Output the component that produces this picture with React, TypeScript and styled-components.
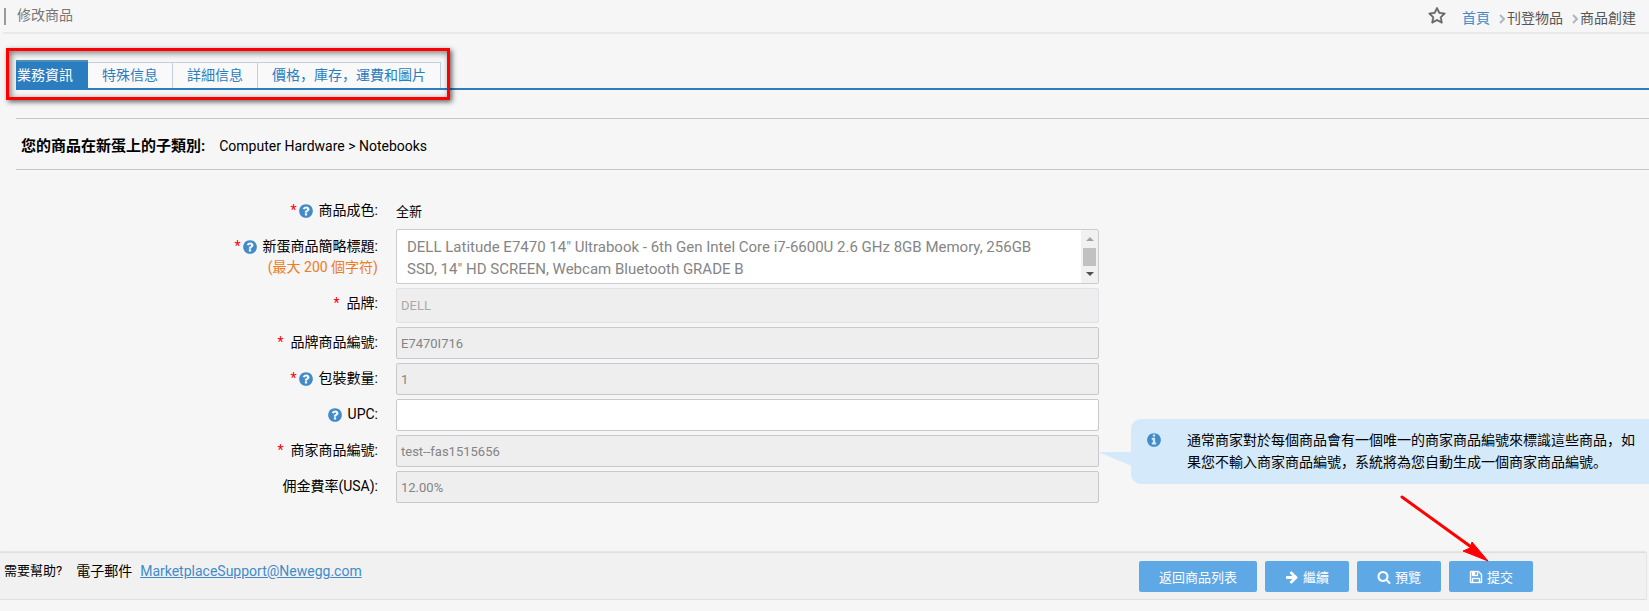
import React from 'react';
import styled, { createGlobalStyle } from 'styled-components';

const GlobalStyle = createGlobalStyle`
  *, *::before, *::after { box-sizing: border-box; }
  body {
    margin: 0;
    background: #f6f6f6;
    color: #000;
    font: 14px/22px Roboto, "Noto Sans CJK SC", sans-serif;
    overflow-x: hidden;
  }
  button, input, textarea { font-family: inherit; }
`;

/* ---------- icons ---------- */

const DISC =
  'q0 209-103 385.5t-279.5 279.5-385.5 103-385.5-103-279.5-279.5-103-385.5 103-385.5 279.5-279.5 385.5-103 385.5 103 279.5 279.5 103 385.5z';

const ICONS = {
  star: 'M1201 1004l306-297-422-62-189-382-189 382-422 62 306 297-73 421 378-199 377 199zm527-357q0 22-26 48l-363 354 86 500q1 7 1 20 0 50-41 50-19 0-40-12l-449-236-449 236q-22 12-40 12-21 0-31.5-14.5t-10.5-35.5q0-6 2-20l86-500-364-354q-25-27-25-48 0-37 56-46l502-73 225-455q19-41 49-41t49 41l225 455 502 73q56 9 56 46z',
  question:
    'M1024 1376v-192q0-14-9-23t-23-9h-192q-14 0-23 9t-9 23v192q0 14 9 23t23 9h192q14 0 23-9t9-23zm256-672q0-88-55.5-163t-138.5-116-170-41q-243 0-371 213-15 24 8 42l132 100q7 6 19 6 16 0 25-12 53-68 86-92 34-24 86-24 48 0 85.5 26t37.5 59q0 38-20 61t-68 45q-63 28-115.5 86.5t-52.5 125.5v36q0 14 9 23t23 9h192q14 0 23-9t9-23q0-19 21.5-49.5t54.5-49.5q32-18 49-28.5t46-35 44.5-48 28-60.5 12.5-81zm384 192' +
    DISC,
  info:
    'M1152 1376v-160q0-14-9-23t-23-9h-96v-512q0-14-9-23t-23-9h-320q-14 0-23 9t-9 23v160q0 14 9 23t23 9h96v320h-96q-14 0-23 9t-9 23v160q0 14 9 23t23 9h448q14 0 23-9t9-23zm-128-896v-160q0-14-9-23t-23-9h-192q-14 0-23 9t-9 23v160q0 14 9 23t23 9h192q14 0 23-9t9-23zm640 416' +
    DISC,
  arrow:
    'M1600 960q0 54-37 91l-651 651q-39 37-91 37-51 0-90-37l-75-75q-38-38-38-91t38-91l293-293h-704q-52 0-84.5-37.5t-32.5-90.5v-128q0-53 32.5-90.5t84.5-37.5h704l-293-294q-38-36-38-90t38-90l75-75q38-38 90-38 53 0 91 38l651 651q37 35 37 90z',
  search:
    'M1216 832q0-185-131.5-316.5t-316.5-131.5-316.5 131.5-131.5 316.5 131.5 316.5 316.5 131.5 316.5-131.5 131.5-316.5zm512 832q0 52-38 90t-90 38q-54 0-90-38l-343-342q-179 124-399 124-143 0-273.5-55.5t-225-150-150-225-55.5-273.5 55.5-273.5 150-225 225-150 273.5-55.5 273.5 55.5 225 150 150 225 55.5 273.5q0 220-124 399l343 343q37 37 37 90z',
  save: 'M512 1536h768v-384h-768v384zm896 0h128v-896q0-14-10-38.5t-20-34.5l-281-281q-10-10-34-20t-39-10v416q0 40-28 68t-68 28h-576q-40 0-68-28t-28-68v-416h-128v1280h128v-416q0-40 28-68t68-28h832q40 0 68 28t28 68v416zm-384-928v-320q0-13-9.5-22.5t-22.5-9.5h-192q-13 0-22.5 9.5t-9.5 22.5v320q0 13 9.5 22.5t22.5 9.5h192q13 0 22.5-9.5t9.5-22.5zm640 32v928q0 40-28 68t-68 28h-1344q-40 0-68-28t-28-68v-1344q0-40 28-68t68-28h928q40 0 88 20t76 48l280 280q28 28 48 76t20 88z',
};

const Svg = styled.svg<{ $color?: string; $stroke?: number }>`
  flex: none;
  fill: ${(p) => p.$color ?? 'currentColor'};
  stroke: ${(p) => (p.$stroke ? 'currentColor' : 'none')};
  stroke-width: ${(p) => p.$stroke ?? 0};
`;

type IconProps = { name: keyof typeof ICONS; size: number; color?: string; stroke?: number };

function Icon({ name, size, color, stroke }: IconProps) {
  return (
    <Svg viewBox="0 0 1792 1792" width={size} height={size} $color={color} $stroke={stroke} aria-hidden="true">
      <path d={ICONS[name]} />
    </Svg>
  );
}

const BLUE = '#428bca';

/* ---------- header ---------- */

const Header = styled.header`
  display: flex;
  justify-content: space-between;
  height: 34px;
  margin-left: 3px;
  padding-right: 13px;
  border-bottom: 2px solid #e8e8e8;
`;

const Title = styled.h1`
  align-self: flex-start;
  margin: 8px 0 0 1px;
  padding: 0 0 2px 11px;
  border-left: 2px solid #999;
  color: #777;
  font-size: 14px;
  font-weight: 400;
  line-height: 15px;
`;

const Crumbs = styled.nav`
  display: flex;
  align-items: center;
  padding-top: 3px;
  color: #555;
`;

const StarButton = styled.button`
  display: flex;
  margin: 0 16px 4px 0;
  padding: 0;
  border: 0;
  background: none;
  color: #666;
`;

const Crumb = styled.a`
  color: ${BLUE};
  text-decoration: none;
`;

const Chevron = styled.svg`
  margin: 2px 2px 0 9px;
  fill: none;
  stroke: #b2b6bf;
  stroke-width: 2;
`;

function Separator() {
  return (
    <Chevron width="6" height="10" viewBox="0 0 6 10" aria-hidden="true">
      <path d="M1 1l4 4-4 4" />
    </Chevron>
  );
}

/* ---------- tabs ---------- */

const Main = styled.main`
  padding-left: 16px;
`;

const TabBar = styled.div`
  position: relative;
  display: flex;
  align-items: flex-end;
  height: 56px;
  border-bottom: 2px solid #2a7dbf;
`;

const Tab = styled.button<{ $active?: boolean }>`
  height: ${(p) => (p.$active ? 28 : 26)}px;
  padding: ${(p) => (p.$active ? '0 15px 0 1px' : '0 14px 2px')};
  border: solid ${(p) => (p.$active ? '#4c8fbd' : '#c5d0dc')};
  border-width: ${(p) => (p.$active ? '2px 0 0' : '1px 1px 0 0')};
  background: ${(p) => (p.$active ? '#2a7dbf' : '#f9f9f9')};
  color: ${(p) => (p.$active ? '#fff' : '#2a7dbf')};
  font-size: 14px;
  line-height: 22px;
  white-space: nowrap;
`;

const Highlight = styled.span`
  position: absolute;
  top: 14px;
  left: -10px;
  width: 444px;
  height: 52px;
  border: 3px solid #f00;
  box-shadow: 2px 2px 5px rgba(0, 0, 0, 0.6), inset 2px 2px 6px rgba(0, 0, 0, 0.5);
  pointer-events: none;
`;

/* ---------- category ---------- */

const Category = styled.section`
  display: flex;
  align-items: center;
  gap: 14px;
  height: 52px;
  margin-top: 28px;
  padding: 4px 5px 0;
  border: solid #c6c6c6;
  border-width: 1px 0;
`;

const CategoryLabel = styled.strong`
  font-size: 15px;
  font-weight: 700;
`;

/* ---------- form ---------- */

const Form = styled.form`
  display: grid;
  gap: 4px;
  padding: 29px 0 49px;
`;

const Row = styled.div`
  position: relative;
  display: grid;
  grid-template-columns: 362fr 703fr 532fr;
  column-gap: 18px;
  align-items: start;
`;

const LabelCell = styled.div<{ $top: number }>`
  padding-top: ${(p) => p.$top}px;
  text-align: right;
  line-height: 21px;
`;

const LabelLine = styled.div`
  display: flex;
  justify-content: flex-end;
  align-items: center;
`;

const Star = styled.span<{ $gap: number }>`
  margin-right: ${(p) => p.$gap}px;
  color: #f00;
`;

const Help = styled.span`
  display: flex;
  margin-right: 5px;
`;

const Hint = styled.div`
  color: #ee7c24;
`;

const Value = styled.div`
  height: 26px;
  padding-top: 2px;
  font-size: 13px;
`;

const Field = styled.input<{ $faded?: boolean }>`
  width: 100%;
  height: ${(p) => (p.$faded ? 35 : 32)}px;
  padding: 0 4px;
  border: 1px solid ${(p) => (p.$faded ? '#e0e2e8' : '#c8c9cc')};
  border-radius: 2px;
  background: ${(p) => (p.readOnly ? '#eee' : '#fff')};
  color: ${(p) => (p.$faded ? '#aaa' : '#848484')};
  font-size: 13px;
  outline: 0;
`;

const AreaBox = styled.div`
  display: flex;
  height: 55px;
  border: 1px solid #ccc;
  border-radius: 2px;
  background: #fff;
`;

const Area = styled.textarea`
  flex: 1;
  min-width: 0;
  padding: 6px 24px 0 10px;
  border: 0;
  background: none;
  color: #858585;
  font-size: 15px;
  line-height: 22px;
  resize: none;
  overflow: hidden;
  outline: 0;
`;

const Rail = styled.div`
  display: flex;
  flex-direction: column;
  justify-content: space-between;
  align-items: center;
  width: 17px;
  padding: 7px 0;
  background: #f1f1f1;
`;

const Thumb = styled.div`
  width: 13px;
  height: 18px;
  background: #c1c1c1;
`;

const Tip = styled.aside`
  position: absolute;
  top: -16px;
  right: 0;
  left: calc((100% - 36px) * 1065 / 1597 + 50px);
  display: flex;
  align-items: flex-start;
  gap: 25px;
  min-height: 65px;
  padding: 10px 4px 10px 15px;
  border-radius: 10px 0 0 10px;
  background: #d4e9f9;
`;

const TipTail = styled.svg`
  position: absolute;
  top: 33px;
  left: -33px;
  fill: #d4e9f9;
`;

const TipIcon = styled.span`
  display: flex;
  padding-top: 3px;
`;

const TipText = styled.p`
  margin: 0;
`;

/* ---------- footer ---------- */

const Footer = styled.footer`
  display: flex;
  justify-content: space-between;
  height: 48px;
  margin-right: 3px;
  padding: 8px 113px 0 4px;
  border: solid #dedede;
  border-width: 1px 0;
  background: #f1f1f1;
  box-shadow: 0 0 2px rgba(0, 0, 0, 0.2);
`;

const Contact = styled.div`
  display: flex;
  align-items: center;
  height: 20px;
`;

const Question = styled.span`
  margin-right: 14px;
  font-size: 13px;
`;

const MailLink = styled.a`
  margin-left: 8px;
  color: ${BLUE};
  text-decoration: underline;
`;

const Actions = styled.div`
  display: flex;
  gap: 8px;
`;

const Action = styled.button`
  position: relative;
  display: flex;
  justify-content: center;
  align-items: center;
  gap: 4px;
  height: 31px;
  padding: 0 20px;
  border: 0;
  border-radius: 2px;
  background: #5fa8e6;
  color: #fff;
  font-size: 13px;
  white-space: nowrap;
`;

const Pointer = styled.svg`
  position: absolute;
  top: -67px;
  left: -50px;
  fill: #f00;
  stroke: #f00;
  pointer-events: none;
`;

/* ---------- page ---------- */

type FieldRow = {
  id: string;
  label: string;
  value: string;
  required?: boolean;
  help?: boolean;
  faded?: boolean;
  editable?: boolean;
  tip?: boolean;
};

const FIELDS: FieldRow[] = [
  { id: 'brand', label: '品牌:', value: 'DELL', required: true, faded: true },
  { id: 'part', label: '品牌商品編號:', value: 'E7470I716', required: true },
  { id: 'pack', label: '包裝數量:', value: '1', required: true, help: true },
  { id: 'upc', label: 'UPC:', value: '', help: true, editable: true },
  { id: 'seller', label: '商家商品編號:', value: 'test--fas1515656', required: true, tip: true },
  { id: 'rate', label: '佣金費率(USA):', value: '12.00%' },
];

function FieldLabel({ id, text, required, help }: { id?: string; text: string; required?: boolean; help?: boolean }) {
  return (
    <LabelLine>
      {required && <Star $gap={help ? 1 : 7}>*</Star>}
      {help && (
        <Help>
          <Icon name="question" size={16} color={BLUE} />
        </Help>
      )}
      {id ? <label htmlFor={id}>{text}</label> : <span>{text}</span>}
    </LabelLine>
  );
}

export default function App() {
  return (
    <>
      <GlobalStyle />
      <Header>
        <Title>修改商品</Title>
        <Crumbs aria-label="breadcrumb">
          <StarButton type="button" aria-label="favorite">
            <Icon name="star" size={18} stroke={60} />
          </StarButton>
          <Crumb href="#home">首頁</Crumb>
          <Separator />
          <span>刊登物品</span>
          <Separator />
          <span>商品創建</span>
        </Crumbs>
      </Header>

      <Main>
        <TabBar>
          <Tab type="button" $active>業務資訊</Tab>
          <Tab type="button">特殊信息</Tab>
          <Tab type="button">詳細信息</Tab>
          <Tab type="button">價格，庫存，運費和圖片</Tab>
          <Highlight />
        </TabBar>

        <Category>
          <CategoryLabel>您的商品在新蛋上的子類別:</CategoryLabel>
          <span>Computer Hardware &gt; Notebooks</span>
        </Category>

        <Form onSubmit={(e) => e.preventDefault()}>
          <Row>
            <LabelCell $top={1}>
              <FieldLabel text="商品成色:" required help />
            </LabelCell>
            <Value>全新</Value>
          </Row>
          <Row>
            <LabelCell $top={7}>
              <FieldLabel id="title" text="新蛋商品簡略標題:" required help />
              <Hint>(最大 200 個字符)</Hint>
            </LabelCell>
            <AreaBox>
              <Area
                id="title"
                defaultValue={
                  'DELL Latitude E7470 14" Ultrabook - 6th Gen Intel Core i7-6600U 2.6 GHz 8GB Memory, 256GB SSD, 14" HD SCREEN, Webcam Bluetooth GRADE B'
                }
              />
              <Rail aria-hidden="true">
                <svg width="8" height="4" viewBox="0 0 8 4"><path d="M0 4L4 0 8 4z" fill="#a3a3a3" /></svg>
                <Thumb />
                <svg width="8" height="4" viewBox="0 0 8 4"><path d="M0 0L4 4 8 0z" fill="#505050" /></svg>
              </Rail>
            </AreaBox>
          </Row>
          {FIELDS.map((f) => (
            <Row key={f.id}>
              <LabelCell $top={5}>
                <FieldLabel id={f.id} text={f.label} required={f.required} help={f.help} />
              </LabelCell>
              <Field id={f.id} type="text" defaultValue={f.value} readOnly={!f.editable} $faded={f.faded} />
              {f.tip && (
                <Tip>
                  <TipTail width="34" height="14" viewBox="0 0 34 14" aria-hidden="true">
                    <path d="M0 0h34v14z" />
                  </TipTail>
                  <TipIcon>
                    <Icon name="info" size={16} color={BLUE} />
                  </TipIcon>
                  <TipText>
                    通常商家對於每個商品會有一個唯一的商家商品編號來標識這些商品，如果您不輸入商家商品編號，系統將為您自動生成一個商家商品編號。
                  </TipText>
                </Tip>
              )}
            </Row>
          ))}
        </Form>
      </Main>

      <Footer>
        <Contact>
          <Question>需要幫助?</Question>
          <span>電子郵件</span>
          <MailLink href="mailto:MarketplaceSupport@Newegg.com">MarketplaceSupport@Newegg.com</MailLink>
        </Contact>
        <Actions>
          <Action type="button">返回商品列表</Action>
          <Action type="button"><Icon name="arrow" size={14} />繼續</Action>
          <Action type="button"><Icon name="search" size={14} />預覽</Action>
          <Action type="button">
            <Icon name="save" size={14} stroke={50} />提交
            <Pointer width="92" height="70" viewBox="0 0 92 70" aria-hidden="true">
              <path d="M3 3L75 55" strokeWidth="3" strokeLinecap="round" />
              <path d="M89 67L73 48 71 54 64 57z" strokeWidth="1" />
            </Pointer>
          </Action>
        </Actions>
      </Footer>
    </>
  );
}
